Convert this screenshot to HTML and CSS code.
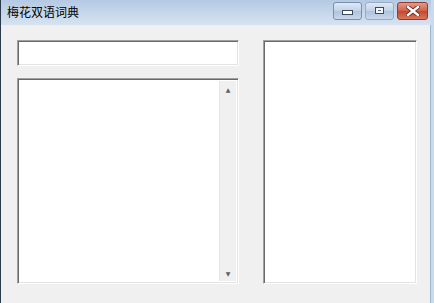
FILE: index.html
```html
<!DOCTYPE html>
<html lang="zh-CN">
<head>
    <meta charset="UTF-8">
    <title>梅花双语词典</title>
    <link rel="stylesheet" href="styles.css">
</head>
<body>

    <div class="window">
        <div class="title-bar">
            <span class="title">梅花双语词典</span>
            <div class="caption-buttons">
                <div class="cap-btn btn-min"><span class="min-glyph"></span></div>
                <div class="cap-btn btn-max"><span class="max-glyph"></span></div>
                <div class="cap-btn btn-close">
                    <svg width="14" height="10" viewBox="0 0 14 10">
                        <path d="M2 1 L12 9 M12 1 L2 9" stroke="#5a2018" stroke-width="4" stroke-linecap="square"/>
                        <path d="M2 1 L12 9 M12 1 L2 9" stroke="#ffffff" stroke-width="2.4" stroke-linecap="square"/>
                    </svg>
                </div>
            </div>
        </div>

        <div class="client">
            <div class="left-col">
                <div class="sunken text-box"></div>
                <div class="sunken list-box">
                    <div class="list-area"></div>
                    <div class="scrollbar">
                        <span class="arrow">▲</span>
                        <span class="arrow">▼</span>
                    </div>
                </div>
            </div>
            <div class="sunken result-box"></div>
        </div>
    </div>

</body>
</html>
```

FILE: styles.css
```css
/* Base styles */
* {
    margin: 0;
    padding: 0;
    box-sizing: border-box;
}

body {
    font-family: "Noto Sans CJK SC", "Noto Sans", sans-serif;
    background-color: #f0f0f0;
}

.window {
    width: 434px;
    height: 303px;
    display: flex;
    flex-direction: column;
    border-left: 1px solid #2b3a4a;
    border-right: 3px solid #c7dcef;
    box-shadow: inset -1px 0 0 #9fb6cf;
    background-color: #f0f0f0;
}

/* Title bar */
.title-bar {
    height: 25px;
    display: flex;
    align-items: center;
    justify-content: space-between;
    padding-left: 6px;
    background: linear-gradient(to bottom, #b4c9e3, #c9d9ec 60%, #d6e2f1);
}

.title {
    font-size: 12px;
    color: #000;
    margin-top: -2px;
}

.caption-buttons {
    display: flex;
    gap: 3px;
    margin-top: -4px;
    margin-right: 3px;
}

.cap-btn {
    height: 18px;
    border: 1px solid #7890ad;
    border-radius: 3px;
    display: flex;
    align-items: center;
    justify-content: center;
    background: linear-gradient(to bottom, #dfe8f4, #c0d1e6 50%, #aec3de 51%, #c8d7ec);
}

.btn-min, .btn-max {
    width: 29px;
}

.btn-max {
    border-color: #98abc4;
}

.btn-close {
    width: 31px;
    border-color: #8e3b30;
    background: linear-gradient(to bottom, #e59a88, #cf5f4a 50%, #c4472f 51%, #d7765a);
}

.min-glyph {
    width: 11px;
    height: 5px;
    border: 1px solid #3b4a5c;
    background-color: #fff;
    margin-top: 4px;
}

.max-glyph {
    width: 9px;
    height: 7px;
    border: 1px solid #3b4a5c;
    background-color: #5a6a7e;
    box-shadow: inset 0 0 0 2px #f4f7fb;
}

/* Client area */
.client {
    flex: 1;
    display: flex;
    gap: 24px;
    padding: 15px 0 0 16px;
}

.left-col {
    width: 222px;
    display: flex;
    flex-direction: column;
    gap: 12px;
}

.sunken {
    background-color: #fff;
    border-top: 1px solid #a0a0a0;
    border-left: 1px solid #a0a0a0;
    border-bottom: 1px solid #ffffff;
    border-right: 1px solid #ffffff;
    box-shadow: inset 1px 1px 0 #696969, inset -1px -1px 0 #e3e3e3;
}

.text-box {
    height: 26px;
}

.list-box {
    height: 206px;
    display: flex;
    padding: 2px;
}

.list-area {
    flex: 1;
}

.scrollbar {
    width: 17px;
    display: flex;
    flex-direction: column;
    justify-content: space-between;
    align-items: center;
    background-color: #f0f0f0;
    border-left: 1px solid #e6e6e6;
    padding: 4px 0 2px 0;
}

.arrow {
    font-family: "DejaVu Sans", sans-serif;
    font-size: 6px;
    color: #606060;
    line-height: 10px;
}

.result-box {
    width: 154px;
    height: 244px;
}
```
